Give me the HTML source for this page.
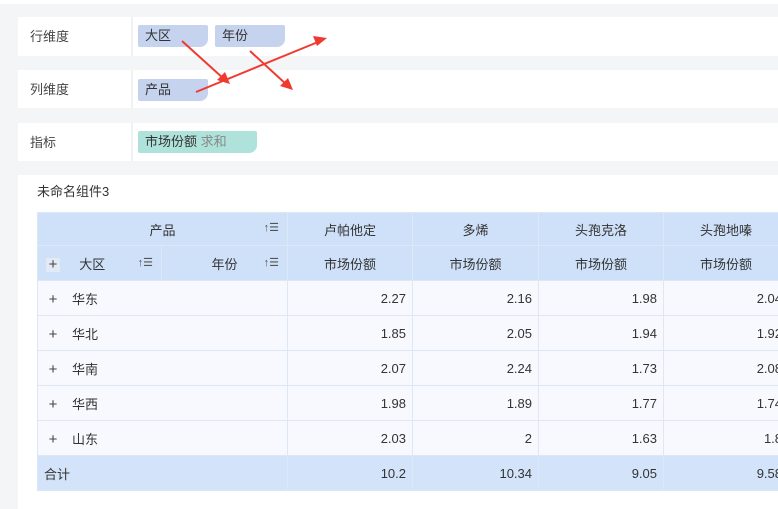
<!DOCTYPE html><html><head><meta charset="utf-8"><style>
*{margin:0;padding:0;box-sizing:border-box}
body{width:778px;height:509px;background:#f4f5f7;font-family:"Liberation Sans","Noto Sans CJK SC",sans-serif;font-size:13px;color:#333;position:relative;overflow:hidden}
.a{position:absolute}
.panel{position:absolute;left:18px;width:760px;background:#fff}
.lab{position:absolute;left:12px;top:0;line-height:39px;color:#444}
.div{position:absolute;left:113px;top:0;width:2px;height:100%;background:#f0f1f3}
.tag{position:absolute;height:22px;line-height:22px;padding-left:7px;background:#c5d3ee;border-radius:2px 2px 8px 2px;color:#333}
table{position:absolute;left:37px;top:212px;border-collapse:collapse;table-layout:fixed;width:751px}
td{border:1px solid #dde8f6;height:35px;padding:0 6px;white-space:nowrap;overflow:hidden}
tr.r1 td{height:33px}
.h td{background:#cfe0f9;text-align:center}
.d td{background:#f7f9fe}
.d td.n{text-align:right;padding-right:6px}
.t td{background:#d3e3f9}
.p{display:inline-block;width:14px;height:14px;line-height:13px;text-align:center;color:#444;margin:0 12px 0 2px;font-size:15px}
.h .p{background:#e2eaf6}
.s{font-size:11px;color:#555;position:absolute}
</style></head><body>
<div class="a" style="left:0;top:0;width:778px;height:4px;background:#fff"></div>
<div class="panel" style="top:17px;height:39px"><div class="lab">行维度</div><div class="div"></div></div>
<div class="panel" style="top:70px;height:38px"><div class="lab">列维度</div><div class="div"></div></div>
<div class="panel" style="top:123px;height:38px"><div class="lab">指标</div><div class="div"></div></div>
<div class="tag" style="left:138px;top:25px;width:70px">大区</div>
<div class="tag" style="left:215px;top:25px;width:70px">年份</div>
<div class="tag" style="left:138px;top:79px;width:70px">产品</div>
<div class="tag" style="left:138px;top:131px;width:119px;background:#aee2da">市场份额 <span style="color:#888">求和</span></div>
<div class="panel" style="top:175px;height:334px"></div>
<div class="a" style="left:37px;top:181px;color:#333">未命名组件3</div>
<table>
<colgroup><col style="width:124px"><col style="width:126px"><col style="width:125px"><col style="width:126px"><col style="width:125px"><col style="width:125px"></colgroup>
<tr class="h r1"><td colspan="2" style="position:relative">产品<span class="s" style="right:8px;top:8px">↑☰</span></td><td>卢帕他定</td><td>多烯</td><td>头孢克洛</td><td>头孢地嗪</td></tr>
<tr class="h"><td style="position:relative;text-align:left;padding-left:6px"><span class="p">+</span>&nbsp; 大区<span class="s" style="right:8px;top:10px">↑☰</span></td><td style="position:relative">年份<span class="s" style="right:8px;top:10px">↑☰</span></td><td>市场份额</td><td>市场份额</td><td>市场份额</td><td>市场份额</td></tr>
<tr class="d"><td colspan="2"><span class="p">+</span>华东</td><td class="n">2.27</td><td class="n">2.16</td><td class="n">1.98</td><td class="n">2.04</td></tr>
<tr class="d"><td colspan="2"><span class="p">+</span>华北</td><td class="n">1.85</td><td class="n">2.05</td><td class="n">1.94</td><td class="n">1.92</td></tr>
<tr class="d"><td colspan="2"><span class="p">+</span>华南</td><td class="n">2.07</td><td class="n">2.24</td><td class="n">1.73</td><td class="n">2.08</td></tr>
<tr class="d"><td colspan="2"><span class="p">+</span>华西</td><td class="n">1.98</td><td class="n">1.89</td><td class="n">1.77</td><td class="n">1.74</td></tr>
<tr class="d"><td colspan="2"><span class="p">+</span>山东</td><td class="n">2.03</td><td class="n">2</td><td class="n">1.63</td><td class="n">1.8</td></tr>
<tr class="t"><td colspan="2">合计</td><td class="n" style="text-align:right">10.2</td><td style="text-align:right">10.34</td><td style="text-align:right">9.05</td><td style="text-align:right">9.58</td></tr>
</table>
<svg class="a" style="left:0;top:0" width="778" height="509">
<g stroke="#f03a30" stroke-width="2" fill="#f03a30">
<line x1="182" y1="41" x2="224" y2="79"/><polygon points="230,84 217,80 225,72" stroke="none"/>
<line x1="196" y1="92" x2="318" y2="42"/><polygon points="327,38 313,36 317,46" stroke="none"/>
<line x1="250" y1="51" x2="287" y2="85"/><polygon points="293,90 280,86 288,78" stroke="none"/>
</g></svg>
</body></html>
